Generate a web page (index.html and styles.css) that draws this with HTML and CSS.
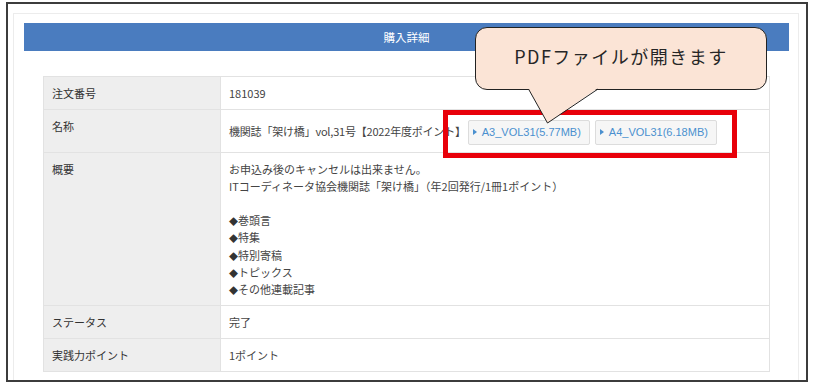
FILE: index.html
```html
<!DOCTYPE html>
<html lang="ja">
<head>
    <meta charset="UTF-8">
    <title>購入詳細</title>
    <link rel="stylesheet" href="styles.css">
</head>
<body>
    <!-- Screenshot frame -->
    <div class="frame">
        <div class="panel">
            <div class="panel-head">購入詳細</div>

            <table class="detail">
                <tr>
                    <th>注文番号</th>
                    <td>181039</td>
                </tr>
                <tr class="row-name">
                    <th>名称</th>
                    <td><span class="item-name">機関誌「架け橋」vol,31号【2022年度ポイント】</span><a class="file-btn" href="#">A3_VOL31(5.77MB)</a><a class="file-btn" href="#">A4_VOL31(6.18MB)</a></td>
                </tr>
                <tr>
                    <th>概要</th>
                    <td>
                        お申込み後のキャンセルは出来ません。<br>
                        ITコーディネータ協会機関誌「架け橋」（年2回発行/1冊1ポイント）<br>
                        <br>
                        <span class="mark">◆</span>巻頭言<br>
                        <span class="mark">◆</span>特集<br>
                        <span class="mark">◆</span>特別寄稿<br>
                        <span class="mark">◆</span>トピックス<br>
                        <span class="mark">◆</span>その他連載記事
                    </td>
                </tr>
                <tr>
                    <th>ステータス</th>
                    <td>完了</td>
                </tr>
                <tr>
                    <th>実践力ポイント</th>
                    <td>1ポイント</td>
                </tr>
            </table>
        </div>
    </div>

    <!-- Annotation: red highlight and speech balloon -->
    <div class="highlight"></div>
    <div class="callout">
        PDFファイルが開きます
        <svg class="callout-tail" width="72" height="37" viewBox="0 0 72 37">
            <polygon points="0,0 19.5,35 70,0" fill="#fbe4d6"/>
            <polyline points="0.5,1 19.5,35 70,1" fill="none" stroke="#222" stroke-width="1"/>
        </svg>
    </div>
</body>
</html>
```

FILE: styles.css
```css
/* Reset */
* {
    margin: 0;
    padding: 0;
    box-sizing: border-box;
}

body {
    font-family: "Noto Sans CJK JP", "Noto Sans", sans-serif;
    background: #fff;
    color: #444;
    width: 815px;
    height: 383px;
    overflow: hidden;
    position: relative;
}

/* Dark outline around the captured area */
.frame {
    margin: 2px 7px 0 6px;
    height: 380px;
    border: 2px solid #3c3c3c;
    overflow: hidden;
    background: #fff;
}

/* Light panel holding the header and table */
.panel {
    margin: 9px 7px 0 5px;
    height: 420px;
    border: 1px solid #ececec;
    padding: 9px 9px 0 10px;
}

.panel-head {
    height: 28px;
    line-height: 28px;
    background: #4a7cbf;
    color: #fff;
    font-size: 11.5px;
    text-align: center;
}

/* Detail table */
.detail {
    margin: 25px 19px 0 19px;
    width: 727px;
    border-collapse: collapse;
    font-size: 11px;
    line-height: 17.1px;
}

.detail th,
.detail td {
    border: 1px solid #e2e2e2;
    padding: 8px 8px 7px;
    text-align: left;
    vertical-align: top;
}

.detail th {
    width: 177px;
    background: #eee;
    color: #333;
    font-weight: normal;
}

.detail td {
    background: #fff;
    color: #444;
}

.row-name td {
    padding-top: 10px;
    padding-bottom: 7px;
}

.item-name {
    letter-spacing: -0.2px;
    margin-right: 2px;
}

.mark {
    font-size: 9px;
    line-height: 0;
    color: #333;
}

/* PDF link buttons */
.file-btn {
    display: inline-block;
    height: 25px;
    line-height: 23px;
    padding: 0 8px 0 4px;
    margin-right: 5px;
    border: 1px solid #dcdcdc;
    border-radius: 2px;
    background: #f6f6f6;
    color: #4a90cf;
    font-family: "Liberation Sans", Arial, sans-serif;
    font-size: 11px;
    text-decoration: none;
}

.file-btn::before {
    content: "";
    display: inline-block;
    border-left: 4px solid #4a90cf;
    border-top: 3px solid transparent;
    border-bottom: 3px solid transparent;
    margin-right: 5px;
    vertical-align: 1px;
}

/* Red highlight box */
.highlight {
    position: absolute;
    left: 443px;
    top: 110px;
    width: 294px;
    height: 48px;
    border: 5px solid #e8000a;
}

/* Speech balloon */
.callout {
    position: absolute;
    left: 475px;
    top: 27px;
    width: 292px;
    height: 63px;
    border: 1px solid #222;
    border-radius: 12px;
    background: #fbe4d6;
    color: #262626;
    font-size: 18px;
    letter-spacing: 1.5px;
    line-height: 56px;
    text-align: center;
}

.callout-tail {
    position: absolute;
    left: 52px;
    top: 60px;
}
```
